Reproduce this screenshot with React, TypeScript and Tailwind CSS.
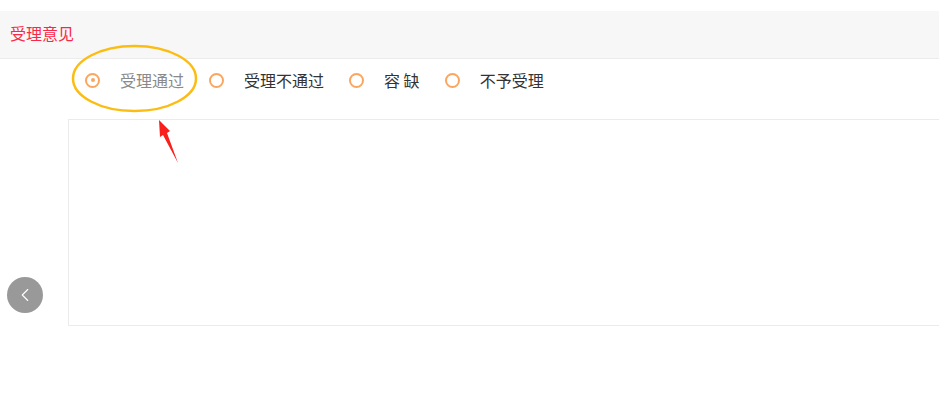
import { ChevronLeft } from 'lucide-react';

const options = [
  { label: '受理通过', checked: true },
  { label: '受理不通过', checked: false },
  { label: '容 缺', checked: false },
  { label: '不予受理', checked: false },
];

const Radio = ({ checked }: { checked: boolean }) => (
  <span className="flex h-[15px] w-[15px] shrink-0 items-center justify-center rounded-full border-2 border-[#fba65f]">
    {checked && <span className="h-[4px] w-[4px] rounded-full bg-[#fba65f]" />}
  </span>
);

const App = () => {
  return (
    <div
      className="relative h-[402px] w-full overflow-hidden bg-white pt-[11px]"
      style={{ fontFamily: '"Microsoft YaHei", "Noto Sans CJK SC", sans-serif' }}
    >
      <div className="flex h-[48px] items-center border-b border-[#ececec] bg-[#f7f7f7] pb-[3px] pl-[10px]">
        <span className="text-[16px] leading-none text-[#f9284a]">受理意见</span>
      </div>

      <div className="flex h-[42px] items-center pl-[85px]">
        {options.map((o) => (
          <label key={o.label} className="mr-[25px] flex items-center">
            <Radio checked={o.checked} />
            <span
              className={`ml-[20px] whitespace-pre text-[16px] leading-none ${
                o.checked ? 'text-[#8a8a8a]' : 'text-[#333]'
              }`}
            >
              {o.label}
            </span>
          </label>
        ))}
      </div>

      <div className="ml-[68px] mt-[18px] h-[207px] w-[900px] border border-[#ebebeb]" />

      <button className="absolute left-[7px] top-[277px] flex h-[36px] w-[36px] items-center justify-center rounded-full bg-[#999]">
        <ChevronLeft className="h-[22px] w-[22px] text-white" strokeWidth={1.2} />
      </button>

      <svg className="pointer-events-none absolute left-0 top-0" width="939" height="402">
        <ellipse cx="134.5" cy="78.5" rx="61.5" ry="32.5" fill="none" stroke="#fbbd12" strokeWidth="2.5" />
        <polygon points="159,120 170,131 167,133 178,163 163,135 160,137" fill="#f91f1c" />
      </svg>
    </div>
  );
};

export default App;
